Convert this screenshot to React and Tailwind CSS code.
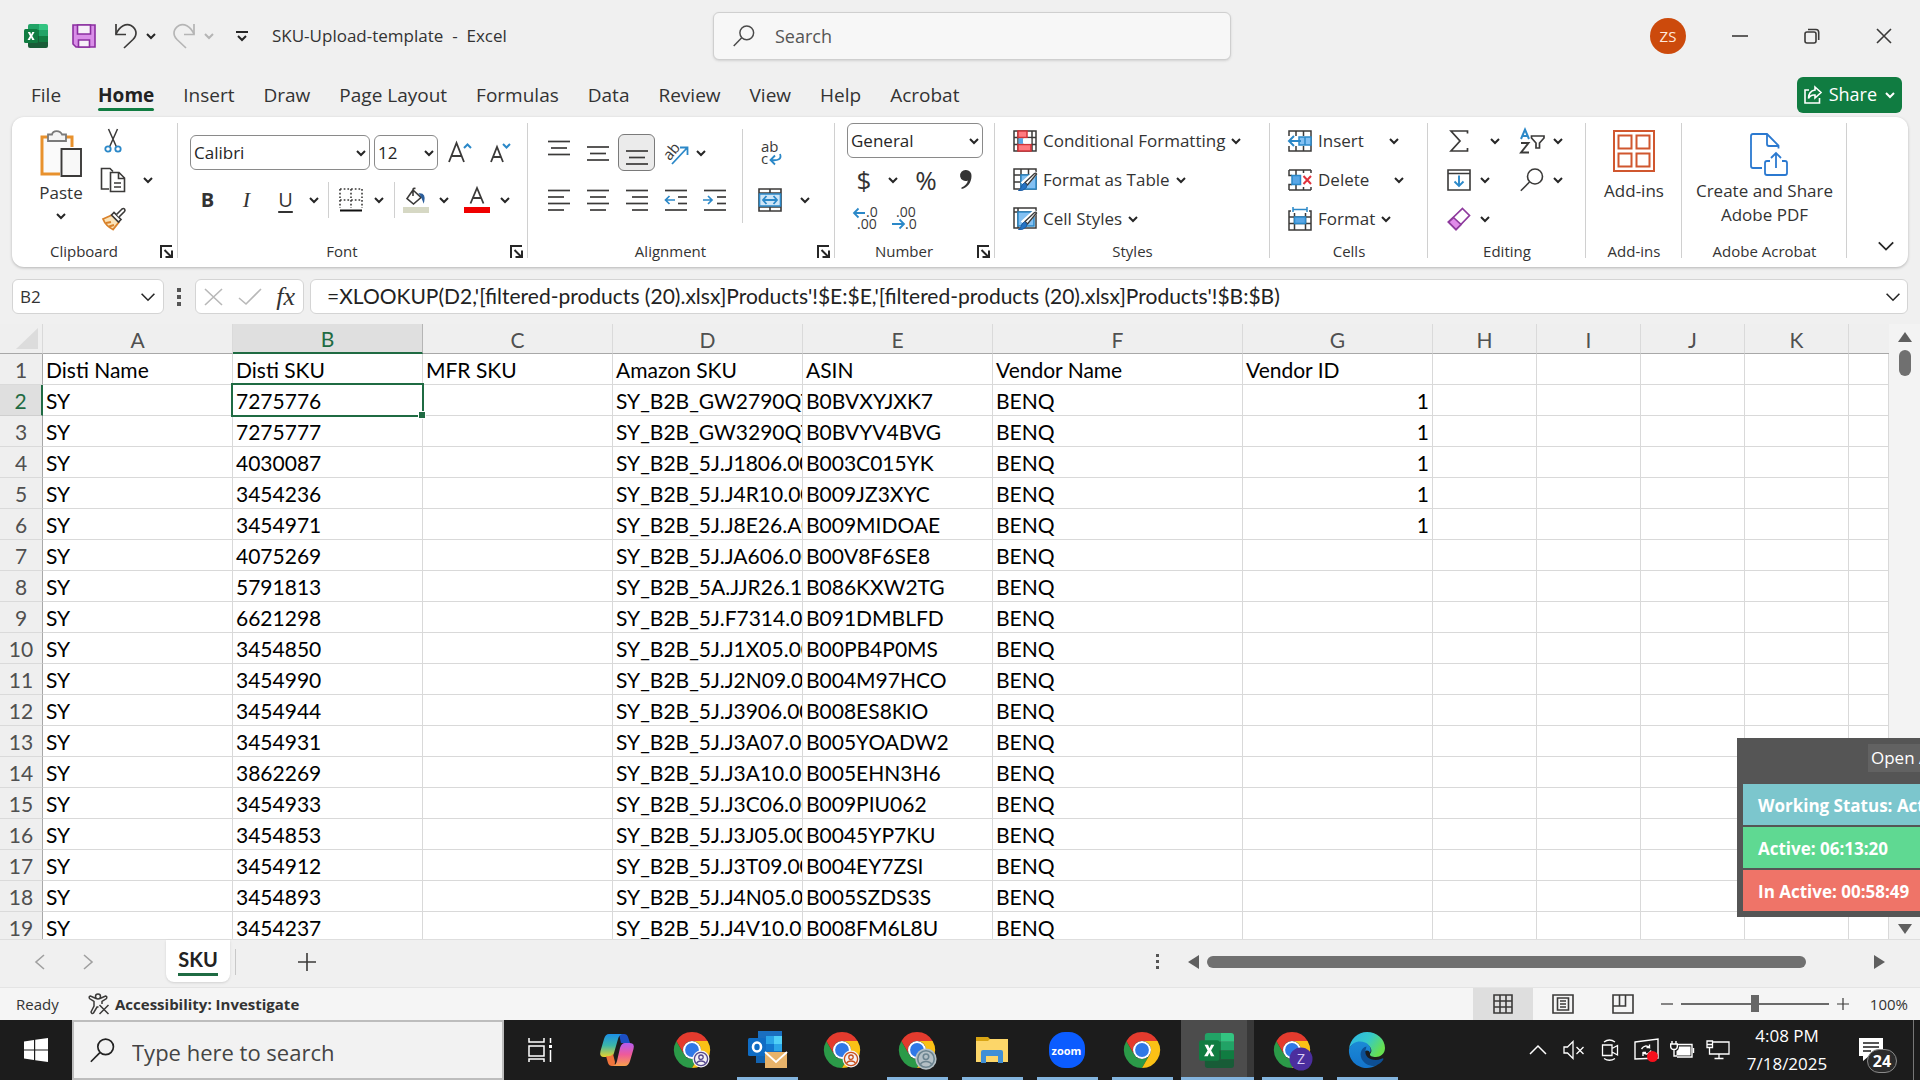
import React from "react";

const UI = "font-['Open_Sans','Noto_Sans',sans-serif]";
const CELL = "font-[Lato,'Open_Sans',sans-serif]";
const INK = "#3b3a39";
const BLUE = "#2b88c8";

/* ---------- generic pieces ---------- */

function Svg({ w = 24, h = 24, vw, vh, children, className = "", sw = 1.6, stroke = INK }) {
  return (
    <svg
      width={w}
      height={h}
      viewBox={`0 0 ${vw || w} ${vh || h}`}
      fill="none"
      stroke={stroke}
      strokeWidth={sw}
      className={`shrink-0 overflow-visible ${className}`}
      aria-hidden="true"
    >
      {children}
    </svg>
  );
}

function Chevron({ color = "#262626", size = 10, sw = 2 }) {
  return (
    <Svg w={size} h={size} vw={10} vh={10} sw={sw} stroke={color}>
      <path d="M1 3 L5 7 L9 3" />
    </Svg>
  );
}

function Btn({ label, className = "", children }) {
  return (
    <button type="button" aria-label={label} className={`flex shrink-0 items-center justify-center ${className}`}>
      {children}
    </button>
  );
}

function Combo({ label, value, className = "" }) {
  return (
    <div className={`relative h-[35px] shrink-0 ${className}`}>
      <select
        aria-label={label}
        defaultValue={value}
        className="h-full w-full appearance-none rounded-md border border-[#8a8a8a] bg-white pl-[3px] text-[17px] text-[#262626]"
      >
        <option>{value}</option>
      </select>
      <span className="pointer-events-none absolute inset-y-0 right-[4px] flex items-center">
        <Chevron />
      </span>
    </div>
  );
}

function Launcher({ label }) {
  return (
    <Btn label={label} className="absolute right-[4px] bottom-[8px] h-4 w-4">
      <Svg w={13} h={13} sw={2} stroke="#262626">
        <path d="M1 13 V1 H12" />
        <path d="M4.500 5 L11 11.500 M12 5.500 V12 H5.500" />
      </Svg>
    </Btn>
  );
}

function Group({ name, className = "", launcher, children }) {
  return (
    <section aria-label={name} className={`relative flex h-[150px] shrink-0 flex-col ${className}`}>
      <div className="h-[121px]">{children}</div>
      <div className={`flex h-[26px] items-center justify-center text-[15px] text-[#333] ${launcher ? "pr-[22px]" : ""}`}>{name}</div>
      {launcher && <Launcher label={`${name} settings`} />}
      <div className="absolute top-[6px] right-0 bottom-[9px] w-px bg-[#d0d0d0]" />
    </section>
  );
}

/* ---------- ribbon icons ---------- */

function ExcelLogo({ size = 24 }) {
  return (
    <Svg w={size} h={size} vw={24} vh={24} stroke="none">
      <path d="M6 0 H15 V6 H4 V2 Q4 0 6 0Z" fill="#21a366" />
      <path d="M15 0 H22 Q24 0 24 2 V6 H15Z" fill="#33c481" />
      <path d="M4 6 H15 V12 H4Z" fill="#107c41" />
      <path d="M15 6 H24 V12 H15Z" fill="#21a366" />
      <path d="M4 12 H15 V18 H4Z" fill="#185c37" />
      <path d="M15 12 H24 V18 H15Z" fill="#107c41" />
      <path d="M4 18 H24 V22 Q24 24 22 24 H6 Q4 24 4 22Z" fill="#185c37" />
      <rect x="0" y="5" width="14" height="14" rx="1.5" fill="#107c41" />
      <path d="M3.800 8 H6.200 L7.200 10.400 L8.300 8 H10.500 L8.300 12 L10.600 16 H8.200 L7.100 13.500 L6 16 H3.500 L5.900 12Z" fill="#fff" />
    </Svg>
  );
}

function SaveIcon() {
  return (
    <Svg stroke="#8b2fa0" sw={1.6}>
      <path d="M1 1 H23 V23 H4 L1 20Z" fill="#d98ee8" />
      <path d="M5.500 1 H18.500 V10 H5.500Z" fill="#f6f0f8" />
      <path d="M6.500 23 V16 H17.500 V23Z" fill="#f6f0f8" />
    </Svg>
  );
}

function UndoIcon({ color = INK, flip }) {
  return (
    <Svg w={24} h={26} stroke={color} sw={1.7} className={flip ? "-scale-x-100" : ""}>
      <path d="M2 1 V11.500 H12" />
      <path d="M2 11 C6 3 12 0 17 2.500 C23 6 23.500 12 19 16.500 L10 25" />
    </Svg>
  );
}

function PasteIcon() {
  return (
    <Svg w={42} h={48}>
      <path d="M4 9 H31 V44 H4Z" fill="#fafafa" stroke="none" />
      <path d="M8 8 H2 V45 H20 M26 8 H32 V18" stroke="#e8912d" strokeWidth="3" />
      <path d="M8 12 V5.500 H12 C13 1 20 1 22 5.500 H26 V12Z" fill="#f4f4f4" stroke="#7a7a7a" strokeWidth="1.8" />
      <path d="M21.500 20 H41 V47 H21.500Z" fill="#f8f8f8" strokeWidth="1.9" />
    </Svg>
  );
}

function CutIcon() {
  return (
    <Svg w={18} h={25} sw={1.5}>
      <path d="M4.500 1 L12.500 19 M13.500 1 L5.500 19" />
      <circle cx="4" cy="21" r="2.700" stroke={BLUE} strokeWidth="1.8" />
      <circle cx="14" cy="21" r="2.700" stroke={BLUE} strokeWidth="1.8" />
    </Svg>
  );
}

function CopyIcon() {
  return (
    <Svg w={26} h={26}>
      <path d="M9 22 H1.500 V1.500 H10 L13 4.500" />
      <path d="M10.500 5.500 H19 L24.500 11 V24.500 H10.500Z M18.500 5.500 V11.500 H24.500 M14 16 H21 M14 20 H21" />
    </Svg>
  );
}

function BrushIcon() {
  return (
    <Svg w={25} h={24}>
      <path d="M2 12 L11 8 L18 15 L12 22.500 C9 21 4 17 2 12Z" fill="#fbe3b8" stroke="#d9822b" strokeWidth="1.800" />
      <path d="M5 16 L10 15 M8 19.500 L13 18" stroke="#d9822b" strokeWidth="2.200" />
      <path d="M10.500 8 L13 5.500 L20 12.500 L17.500 15Z" fill="#fff" />
      <path d="M15.500 7.500 L21 2 Q22.500 1 23.500 2 Q24.500 3.200 23.500 4.500 L18 10" fill="#fff" />
    </Svg>
  );
}

function Lines({ rows, children }) {
  return (
    <Svg w={24} h={22} sw={1.7}>
      {rows.map(([x1, x2, y]) => (
        <path key={y} d={`M${x1} ${y} H${x2}`} />
      ))}
      {children}
    </Svg>
  );
}

const ROW_LEFT = [[1, 23, 1.5], [1, 17, 8], [1, 23, 14.5], [1, 17, 21]];
const ROW_CENTER = [[1, 23, 1.5], [4, 20, 8], [1, 23, 14.5], [4, 20, 21]];
const ROW_RIGHT = [[1, 23, 1.5], [7, 23, 8], [1, 23, 14.5], [7, 23, 21]];
const ROW_INDENT = [[1, 23, 1.5], [14, 23, 8], [14, 23, 14.5], [1, 23, 21]];

function OrientIcon() {
  return (
    <Svg w={26} h={26}>
      <text x="0" y="17" transform="rotate(-50 8 12)" fontSize="15" fill={INK} stroke="none" className={UI}>ab</text>
      <path d="M9 24 L24 8 M17 7.500 H24.500 V15" stroke={BLUE} strokeWidth="1.800" />
    </Svg>
  );
}

function WrapIcon() {
  return (
    <Svg w={24} h={26}>
      <text x="2" y="12" fontSize="15" fill={INK} stroke="none" className={UI}>ab</text>
      <text x="2" y="24" fontSize="15" fill={INK} stroke="none" className={UI}>c</text>
      <path d="M21 14 C23 19 19 21 12 20 M16 15.500 L11.500 20 L16 24.500" stroke={BLUE} strokeWidth="1.800" />
    </Svg>
  );
}

function MergeIcon() {
  return (
    <Svg w={24} h={24}>
      <path d="M1 1 H23 V23 H1Z M1 5 H23 M1 19 H23 M12 1 V5 M12 19 V23" />
      <path d="M1.500 6 H22.500 V18 H1.500Z" fill="#cfe6f8" stroke={BLUE} />
      <path d="M5 12 H19 M8.500 8 L5 12 L8.500 16 M15.500 8 L19 12 L15.500 16" stroke={BLUE} strokeWidth="1.800" />
    </Svg>
  );
}

function DecimalIcon({ increase }) {
  return (
    <Svg w={26} h={26}>
      <text x={increase ? 13 : 4} y="11" fontSize="14" fill={INK} stroke="none" className={UI}>{increase ? ".0" : ".00"}</text>
      <text x={increase ? 4 : 13} y="23" fontSize="14" fill={INK} stroke="none" className={UI}>{increase ? ".00" : ".0"}</text>
      {increase ? (
        <path d="M1 7 H12 M5.500 2.500 L1 7 L5.500 11.500" stroke={BLUE} strokeWidth="1.800" />
      ) : (
        <path d="M0 18 H12 M7.500 13.500 L12 18 L7.500 22.500" stroke={BLUE} strokeWidth="1.800" />
      )}
    </Svg>
  );
}

function BordersIcon() {
  return (
    <Svg w={24} h={24}>
      <path d="M1 1 H23 M1 12 H23 M1 1 V20 M12 1 V20 M23 1 V20" strokeDasharray="1.700 2" />
      <path d="M1 22.500 H23" stroke="#111" strokeWidth="2" />
    </Svg>
  );
}

function FillIcon() {
  return (
    <Svg w={26} h={26}>
      <path d="M10 3 L18 10.500 L10.500 17 L4 11.500 Z M10 9 V3 Q10 .8 12.500 1.500" />
      <path d="M17 7 Q22 7 20.500 14 L18.500 9Z" fill="#2a5d9a" stroke="#2a5d9a" />
      <path d="M0 20 H26 V26 H0Z" fill="#d6d8c4" stroke="none" />
    </Svg>
  );
}

function FontColorIcon() {
  return (
    <Svg w={26} h={26} sw={1.8}>
      <path d="M6.500 16.500 L13 1 L19.500 16.500 M9 11 H17" />
      <path d="M0 20 H26 V26 H0Z" fill="#f00000" stroke="none" />
    </Svg>
  );
}

function GrowIcon({ shrink }) {
  return shrink ? (
    <Svg w={22} h={24} sw={1.8}>
      <path d="M2 21 L8 6 L14 21 M4 16 H12" />
      <path d="M14 3 L17.500 6.500 L21 3" stroke={BLUE} strokeWidth="2" />
    </Svg>
  ) : (
    <Svg w={24} h={24} sw={1.8}>
      <path d="M1 21 L8.500 2 L16 21 M3.500 15 H13.500" />
      <path d="M16 7 L19.500 3.500 L23 7" stroke={BLUE} strokeWidth="2" />
    </Svg>
  );
}

function CondIcon() {
  return (
    <Svg w={24} h={22} sw={1.5}>
      <path d="M1 1 H23 V21 H1Z M1 7.500 H23 M1 14.500 H23 M5 1 V21 M19 1 V21" />
      <path d="M5 1 H14 V7.500 H5Z M5 14.500 H18 V21 H5Z" fill="#ff7b80" stroke="#d13438" />
      <path d="M5.500 8.300 H10 V13.800 H5.500Z" fill="#5aa7e6" stroke="none" />
      <path d="M10.500 8.300 H18.200 V13.800 H10.500Z" fill="#fff" stroke="none" />
    </Svg>
  );
}

function TableBrush({ solid }) {
  return (
    <Svg w={24} h={24} sw={1.5}>
      {solid ? (
        <>
          <path d="M1 1 H23 V21 H1Z M5 1 V21 M1 5 H23" />
          <path d="M5 5 H21 V19 H5Z" fill="#83c0f2" stroke={BLUE} />
        </>
      ) : (
        <>
          <path d="M1 1 H23 V21 H1Z M1 7 H23 M1 14 H8 M8 1 V21 M15.500 1 V8" />
          <path d="M8 7 H23 V21 H8Z" fill="#83c0f2" stroke={BLUE} />
        </>
      )}
      <path d="M23 5.500 L13 17 L10 14.500 L21 4.500Z" fill="#fff" stroke="#fff" strokeWidth="3" />
      <path d="M23.500 6 L14.500 17 L12 14.500 L21.500 5.500 Q23 4.500 23.500 6Z" fill="#fff" strokeWidth="1.400" />
      <path d="M11.500 15 Q15 16.500 13.500 19.500 Q10 23.500 5.500 22.500 Q8.500 21 8.500 18 Q9.500 15.500 11.500 15Z" fill="#2674c4" stroke="#1b5ba3" strokeWidth="1" />
    </Svg>
  );
}

function InsertCells() {
  return (
    <Svg w={24} h={22} sw={1.5}>
      <path d="M1 6 V1 H23 V21 H1 V16 M8 1 V6 M15.500 1 V6 M8 16 V21 M15.500 16 V21" />
      <path d="M11 7 H23 V15 H11Z" fill="#83c0f2" stroke={BLUE} />
      <path d="M17 7 V15" stroke={BLUE} />
      <path d="M1 11 H13 M6 6 L1 11 L6 16" stroke={BLUE} strokeWidth="2" />
    </Svg>
  );
}

function DeleteCells() {
  return (
    <Svg w={24} h={22} sw={1.5}>
      <path d="M1 1 H23 M1 21 H23 M1 1 V6.500 H4 M1 21 V15.500 H4 M8 1 V6 M15.500 1 V4 M8 16 V21 M15.500 18 V21 M23 1 V4 M23 18 V21" />
      <path d="M4 6.500 H12.500 V15.500 H4Z" fill="#5aa7e6" stroke={BLUE} />
      <path d="M15.500 7 L23 15 M23 7 L15.500 15" stroke="#e0323c" strokeWidth="2" />
    </Svg>
  );
}

function FormatCells() {
  return (
    <Svg w={24} h={24} sw={1.5}>
      <path d="M5 0 V5 M19 0 V5 M5 2.500 H19" stroke={BLUE} />
      <path d="M3 4 H1 V23 H23 V4 H21 M1 10 H23 M1 16.500 H23 M6.500 6 V23 M17.500 6 V23" />
      <path d="M6.500 10 H17.500 V16.500 H6.500Z" fill="#5aa7e6" stroke={BLUE} />
    </Svg>
  );
}

function SigmaIcon() {
  return (
    <Svg w={20} h={24} sw={1.7}>
      <path d="M18.500 4.500 V2 H2 L11 12 L2 22 H18.500 V19" />
    </Svg>
  );
}

function SortIcon() {
  return (
    <Svg w={26} h={26} sw={1.7}>
      <path d="M2 11 L6 1.500 L10 11 M3.500 8 H8.500" stroke={BLUE} strokeWidth="2" />
      <path d="M2 15 H9.500 L2 24.500 H10" strokeWidth="1.900" />
      <path d="M12.500 8 H25 V10 L20.500 15 V20 H17 V15 L12.500 10Z" />
    </Svg>
  );
}

function FillDown() {
  return (
    <Svg w={24} h={22}>
      <path d="M1 1 H23 V21 H1Z M1 4.500 H23" />
      <path d="M12 6.500 V17 M7.500 12.500 L12 17 L16.500 12.500" stroke={BLUE} strokeWidth="1.900" />
    </Svg>
  );
}

function Magnifier({ size = 24, color = INK, sw = 1.6 }) {
  return (
    <Svg w={size} h={size} vw={24} vh={24} stroke={color} sw={sw}>
      <circle cx="15" cy="8.500" r="7.500" />
      <path d="M9.500 14 L.8 22.800" />
    </Svg>
  );
}

function EraserIcon() {
  return (
    <Svg w={24} h={24} stroke="#8e3a9d" sw={1.7}>
      <path d="M15.500 1.500 L22.500 8.500 L9 22.500 L1.500 15Z" fill="#fff" />
      <path d="M6.500 10.500 L14 17.500 L9 22.500 L1.500 15Z" fill="#e08be9" />
    </Svg>
  );
}

function AddinsIcon() {
  return (
    <Svg w={42} h={42} stroke="#d0572f" sw={2}>
      <path d="M1 1 H41 V41 H1Z M5.500 5.500 H18.500 V18.500 H5.500Z M23.500 5.500 H36.500 V18.500 H23.500Z M5.500 23.500 H18.500 V36.500 H5.500Z M23.500 23.500 H36.500 V36.500 H23.500Z" />
    </Svg>
  );
}

function PdfShareIcon() {
  return (
    <Svg w={38} h={43} stroke="#2b79d0" sw={1.8} className="ml-2">
      <path d="M12 35 H3 Q1 35 1 33 V3 Q1 1 3 1 H17 L28.500 12.500 V15.500" />
      <path d="M17 1 V11 Q17 13 19 13 H28.500" />
      <path d="M20 28 H17 Q15 28 15 30 V40 Q15 42 17 42 H35 Q37 42 37 40 V30 Q37 28 35 28 H32 M26 35 V20.500 M21 25 L26 20 L31 25" />
    </Svg>
  );
}

/* ---------- top areas ---------- */

function TitleBar() {
  return (
    <header className="flex h-[72px] shrink-0 items-center">
      <div className="flex w-[713px] shrink-0 items-center pl-6">
        <ExcelLogo />
        <Btn label="Save" className="ml-6"><SaveIcon /></Btn>
        <Btn label="Undo" className="ml-[18px]"><UndoIcon /></Btn>
        <Btn label="Undo list" className="ml-2"><Chevron /></Btn>
        <Btn label="Redo" className="ml-4"><UndoIcon color="#b5b5b5" flip /></Btn>
        <Btn label="Redo list" className="ml-2"><Chevron color="#b5b5b5" /></Btn>
        <Btn label="Customize toolbar" className="ml-[22px]">
          <Svg w={12} h={12} stroke="#262626" sw={2}>
            <path d="M0 2 H12 M2 6 L6 10 L10 6" />
          </Svg>
        </Btn>
        <h1 className="ml-6 text-[17px] whitespace-pre text-[#333]">SKU-Upload-template  -  Excel</h1>
      </div>
      <label className="flex h-12 w-[518px] shrink-0 items-center rounded-md border border-[#cfcfcf] bg-[#f7f7f7] pl-[19px] shadow-sm">
        <Magnifier size={22} color="#4a4a4a" />
        <input
          aria-label="Search"
          placeholder="Search"
          className="ml-5 flex-1 bg-transparent text-[18px] outline-none placeholder:text-[#555]"
        />
      </label>
      <div className="ml-auto flex items-center">
        <button type="button" className="flex h-9 w-9 items-center justify-center rounded-full bg-[#cc4a0c] text-[15px] text-[#ffe9dc]">ZS</button>
        <Btn label="Minimize" className="ml-[18px] h-12 w-[72px]">
          <Svg w={16} h={16}><path d="M0 8 H16" /></Svg>
        </Btn>
        <Btn label="Restore" className="h-12 w-[72px]">
          <Svg w={16} h={16}>
            <rect x="1" y="4" width="11" height="11" rx="2" />
            <path d="M4 1.500 H12 Q14.700 1.500 14.700 4.500 V12" />
          </Svg>
        </Btn>
        <Btn label="Close" className="h-12 w-[72px]">
          <Svg w={16} h={16}><path d="M1 1 L15 15 M15 1 L1 15" /></Svg>
        </Btn>
      </div>
    </header>
  );
}

const TABS = ["File", "Home", "Insert", "Draw", "Page Layout", "Formulas", "Data", "Review", "View", "Help", "Acrobat"];

function RibbonTabs() {
  return (
    <nav className="flex h-[45px] shrink-0 items-center justify-between pr-[18px] pl-[31px]">
      <div className="flex items-center gap-[29px] pt-[2px]">
        {TABS.map((t) => (
          <button
            key={t}
            type="button"
            className={
              t === "Home"
                ? "relative ml-2 text-[19px] font-bold text-[#222] after:absolute after:inset-x-0 after:-bottom-[1px] after:h-[3px] after:rounded after:bg-[#107c41]"
                : "text-[19px] text-[#333]"
            }
          >
            {t}
          </button>
        ))}
      </div>
      <button type="button" className="flex h-9 items-center rounded-md bg-[#107c41] px-[7px] text-[18px] text-white">
        <Svg w={18} h={18} stroke="#fff">
          <path d="M5 4 H1 V17 H15.500 V12" />
          <path d="M11 1 L17 6.500 L11 12 V9 Q6.500 8.500 4.500 12.500 Q4.500 5 11 4Z" />
        </Svg>
        <span className="ml-[7px]">Share</span>
        <span className="ml-[8px]"><Chevron color="#fff" /></span>
      </button>
    </nav>
  );
}

function MenuRow({ icon, text, wide }) {
  return (
    <button type="button" className="flex h-[39px] items-center text-[17px] text-[#333]">
      {icon}
      <span className="ml-[6px]">{text}</span>
      <span className={wide ? "ml-[25px]" : "ml-[6px]"}><Chevron /></span>
    </button>
  );
}

function Ribbon() {
  return (
    <div className="mx-3 flex h-[150px] shrink-0 rounded-xl bg-white text-[#333] shadow-[0_1px_3px_rgba(0,0,0,0.25)]">
      <Group name="Clipboard" className="w-[166px]" launcher>
        <div className="flex pl-[29px]">
          <button type="button" className="flex w-10 flex-col items-center pt-3 text-[17px] leading-6">
            <PasteIcon />
            <span className="mt-1">Paste</span>
            <span className="mt-[6px]"><Chevron /></span>
          </button>
          <div className="ml-3 flex w-10 flex-col items-center pt-1">
            <Btn label="Cut" className="h-[39px]"><CutIcon /></Btn>
            <Btn label="Copy" className="h-[39px]"><CopyIcon /></Btn>
            <Btn label="Format Painter" className="h-[39px]"><BrushIcon /></Btn>
          </div>
          <Btn label="Copy options" className="mt-[43px] ml-[10px] h-[39px] w-[10px]"><Chevron /></Btn>
        </div>
      </Group>

      <Group name="Font" className="w-[350px]" launcher>
        <div className="pt-3">
          <div className="flex h-[47px] items-center pl-3">
            <Combo label="Font name" value="Calibri" className="w-[180px]" />
            <Combo label="Font size" value="12" className="ml-1 w-16" />
            <Btn label="Increase font size" className="w-[44px]"><GrowIcon /></Btn>
            <Btn label="Decrease font size" className="w-[36px]"><GrowIcon shrink /></Btn>
          </div>
          <div className="flex h-[47px] items-center pl-[10px] text-[20px]">
            <Btn label="Bold" className="w-[39px] font-bold">B</Btn>
            <Btn label="Italic" className="w-[39px] font-['Liberation_Serif',serif] text-[22px] italic">I</Btn>
            <Btn label="Underline" className="w-[39px] underline underline-offset-4">U</Btn>
            <Btn label="Underline options" className="w-[17px]"><Chevron /></Btn>
            <div className="mr-[5px] ml-[6px] h-9 w-px bg-[#d0d0d0]" />
            <Btn label="Borders" className="w-[34px]"><BordersIcon /></Btn>
            <Btn label="Border options" className="w-[22px]"><Chevron /></Btn>
            <div className="mx-[4px] h-9 w-px bg-[#d0d0d0]" />
            <Btn label="Fill color" className="w-[34px]"><FillIcon /></Btn>
            <Btn label="Fill options" className="w-[22px]"><Chevron /></Btn>
            <Btn label="Font color" className="w-[44px]"><FontColorIcon /></Btn>
            <Btn label="Font color options" className="w-[12px]"><Chevron /></Btn>
          </div>
        </div>
      </Group>

      <Group name="Alignment" className="w-[307px]" launcher>
        <div className="flex items-center pt-3 pl-[11px]">
          <div className="w-[195px]">
            <div className="flex h-[47px] items-center">
              <Btn label="Top align" className="w-[39px] pb-1"><Lines rows={[[1, 23, 1.5], [4, 20, 8], [1, 23, 14.5]]} /></Btn>
              <Btn label="Middle align" className="w-[39px]"><Lines rows={[[1, 23, 5], [4, 20, 11.5], [1, 23, 18]]} /></Btn>
              <Btn label="Bottom align" className="mx-[1px] h-[37px] w-[37px] rounded-md border border-[#7a7a7a] bg-[#ebebeb] pt-2">
                <Lines rows={[[1, 23, 5], [4, 20, 11.5], [1, 23, 18]]} />
              </Btn>
              <Btn label="Orientation" className="w-[39px]"><OrientIcon /></Btn>
              <Btn label="Orientation options" className="w-[12px]"><Chevron /></Btn>
            </div>
            <div className="flex h-[47px] items-center">
              <Btn label="Align left" className="w-[39px]"><Lines rows={ROW_LEFT} /></Btn>
              <Btn label="Center" className="w-[39px]"><Lines rows={ROW_CENTER} /></Btn>
              <Btn label="Align right" className="w-[39px]"><Lines rows={ROW_RIGHT} /></Btn>
              <Btn label="Decrease indent" className="w-[39px]">
                <Lines rows={ROW_INDENT}><path d="M1.500 11 H11 M5.500 7 L1.500 11 L5.500 15" stroke={BLUE} /></Lines>
              </Btn>
              <Btn label="Increase indent" className="w-[39px]">
                <Lines rows={ROW_INDENT}><path d="M0 11 H9 M5 7 L9 11 L5 15" stroke={BLUE} /></Lines>
              </Btn>
            </div>
          </div>
          <div className="ml-2 h-[94px] w-px bg-[#d0d0d0]" />
          <div>
            <Btn label="Wrap text" className="h-[47px] w-14"><WrapIcon /></Btn>
            <div className="flex">
              <Btn label="Merge and center" className="h-[47px] w-[53px]"><MergeIcon /></Btn>
              <Btn label="Merge options" className="w-[18px]"><Chevron /></Btn>
            </div>
          </div>
        </div>
      </Group>

      <Group name="Number" className="w-[160px]" launcher>
        <div className="pt-1">
          <div className="flex h-[39px] items-center pl-3">
            <Combo label="Number format" value="General" className="w-[136px]" />
          </div>
          <div className="flex h-[39px] items-center pl-[11px] text-[26px] leading-none">
            <Btn label="Currency" className="w-9">$</Btn>
            <Btn label="Currency options" className="w-[22px]"><Chevron /></Btn>
            <Btn label="Percent" className="w-[44px]">%</Btn>
            <Btn label="Comma style" className="w-9">
              <Svg w={12} h={20} stroke="none">
                <path d="M6 0 A5.500 5.500 0 0 1 11.500 6 C11.500 13 7 18 1.500 19 V17.500 C5 16 7.500 13.500 7.800 10.500 A5.500 5.500 0 1 1 6 0Z" fill="#333" />
              </Svg>
            </Btn>
          </div>
          <div className="flex h-[39px] items-center pl-[11px]">
            <Btn label="Increase decimal" className="w-[39px]"><DecimalIcon increase /></Btn>
            <Btn label="Decrease decimal" className="w-[39px]"><DecimalIcon /></Btn>
          </div>
        </div>
      </Group>

      <Group name="Styles" className="w-[275px]">
        <div className="pt-1 pl-[18px]">
          <MenuRow icon={<CondIcon />} text="Conditional Formatting" />
          <MenuRow icon={<TableBrush />} text="Format as Table" />
          <MenuRow icon={<TableBrush solid />} text="Cell Styles" />
        </div>
      </Group>

      <Group name="Cells" className="w-[158px]">
        <div className="pt-1 pl-[18px]">
          <MenuRow icon={<InsertCells />} text="Insert" wide />
          <MenuRow icon={<DeleteCells />} text="Delete" wide />
          <MenuRow icon={<FormatCells />} text="Format" />
        </div>
      </Group>

      <Group name="Editing" className="w-[158px]">
        <div className="grid grid-cols-[40px_32px_42px_10px] grid-rows-[39px_39px_39px] pt-1 pl-[11px]">
          <Btn label="AutoSum"><SigmaIcon /></Btn>
          <Btn label="AutoSum options"><Chevron /></Btn>
          <Btn label="Sort and filter"><SortIcon /></Btn>
          <Btn label="Sort options"><Chevron /></Btn>
          <Btn label="Fill"><FillDown /></Btn>
          <Btn label="Fill down options" className="pr-5"><Chevron /></Btn>
          <Btn label="Find"><Magnifier /></Btn>
          <Btn label="Find options"><Chevron /></Btn>
          <Btn label="Clear"><EraserIcon /></Btn>
          <Btn label="Clear options" className="pr-5"><Chevron /></Btn>
        </div>
      </Group>

      <Group name="Add-ins" className="w-24">
        <button type="button" className="flex w-full flex-col items-center pt-[13px] text-[17px] leading-6">
          <AddinsIcon />
          <span className="mt-[7px]">Add-ins</span>
        </button>
      </Group>

      <Group name="Adobe Acrobat" className="w-[165px]">
        <button type="button" className="flex w-full flex-col items-center pt-4 text-[17px] leading-6">
          <PdfShareIcon />
          <span className="mt-[3px] text-center">Create and Share<br />Adobe PDF</span>
        </button>
      </Group>

      <Btn label="Collapse ribbon" className="mt-auto mr-3 mb-[11px] ml-auto h-5 w-5">
        <Chevron size={18} sw={1} />
      </Btn>
    </div>
  );
}

function FormulaBar() {
  return (
    <div className="mx-3 mt-3 flex h-[35px] shrink-0 items-center">
      <div className="flex h-full w-[152px] items-center justify-between rounded-md border border-[#d4d4d4] bg-white pr-[7px] pl-[7px]">
        <input aria-label="Name box" defaultValue="B2" className="w-20 bg-transparent text-[17px] text-[#333] outline-none" />
        <Chevron size={16} sw={1} />
      </div>
      <div className="flex w-[29px] justify-center">
        <Svg w={4} h={18} stroke="none"><path d="M0 0 H4 V4 H0Z M0 7 H4 V11 H0Z M0 14 H4 V18 H0Z" fill="#555" /></Svg>
      </div>
      <div className="ml-[2px] flex h-full w-[109px] items-center justify-between rounded-md border border-[#d4d4d4] bg-white px-[8px]">
        <Btn label="Cancel"><Svg w={20} h={20} stroke="#b8b8b8"><path d="M1 2 L18 18 M18 2 L1 18" /></Svg></Btn>
        <Btn label="Enter"><Svg w={24} h={20} stroke="#b8b8b8"><path d="M1 11 L8 17 L23 2" /></Svg></Btn>
        <button type="button" aria-label="Insert function" className="font-['Liberation_Serif',serif] text-[26px] leading-none text-[#333] italic">fx</button>
      </div>
      <div className="ml-[6px] flex h-full flex-1 items-center rounded-md border border-[#d4d4d4] bg-white pr-[6px] pl-4">
        <input
          aria-label="Formula"
          defaultValue="=XLOOKUP(D2,'[filtered-products (20).xlsx]Products'!$E:$E,'[filtered-products (20).xlsx]Products'!$B:$B)"
          className={`${CELL} h-[31px] flex-1 bg-transparent pb-[2px] text-[21px] text-[#222] outline-none`}
        />
        <Chevron size={16} sw={1} />
      </div>
    </div>
  );
}

/* ---------- worksheet ---------- */

const COLS = ["A", "B", "C", "D", "E", "F", "G", "H", "I", "J", "K"];

const ROWS = [
  ["7275776", "GW2790QT", "B0BVXYJXK7"],
  ["7275777", "GW3290QT", "B0BVYV4BVG"],
  ["4030087", "5J.J1806.001", "B003C015YK"],
  ["3454236", "5J.J4R10.001", "B009JZ3XYC"],
  ["3454971", "5J.J8E26.A01", "B009MIDOAE"],
  ["4075269", "5J.JA606.001", "B00V8F6SE8"],
  ["5791813", "5A.JJR26.100", "B086KXW2TG"],
  ["6621298", "5J.F7314.001", "B091DMBLFD"],
  ["3454850", "5J.J1X05.001", "B00PB4P0MS"],
  ["3454990", "5J.J2N09.001", "B004M97HCO"],
  ["3454944", "5J.J3906.001", "B008ES8KIO"],
  ["3454931", "5J.J3A07.001", "B005YOADW2"],
  ["3862269", "5J.J3A10.001", "B005EHN3H6"],
  ["3454933", "5J.J3C06.001", "B009PIU062"],
  ["3454853", "5J.J3J05.001", "B0045YP7KU"],
  ["3454912", "5J.J3T09.001", "B004EY7ZSI"],
  ["3454893", "5J.J4N05.001", "B005SZDS3S"],
  ["3454237", "5J.J4V10.001", "B008FM6L8U"],
];

const SHEET = [
  ["Disti Name", "Disti SKU", "MFR SKU", "Amazon SKU", "ASIN", "Vendor Name", "Vendor ID"],
  ...ROWS.map(([sku, model, asin], i) => ["SY", sku, "", `SY_B2B_${model}`, asin, "BENQ", i < 5 ? "1" : ""]),
];

function Cell({ value, numeric, selected }) {
  if (selected) {
    return (
      <td className="relative border-r border-b border-[#d9d9d9] p-0 pt-[2px] pl-[3px]">
        {value}
        <span className="pointer-events-none absolute -top-[2px] -right-[2px] -bottom-[2px] -left-[2px] border-2 border-[#1f6b43]" />
        <span className="absolute -right-[3px] -bottom-[3px] h-[6px] w-[6px] bg-[#1f6b43] outline-1 outline-white" />
      </td>
    );
  }
  return (
    <td className={`overflow-hidden border-r border-b border-[#d9d9d9] p-0 pt-[2px] ${numeric ? "pr-[3px] text-right" : "pl-[3px]"}`}>{value}</td>
  );
}

function Worksheet() {
  return (
    <div className="mt-[10px] flex min-h-0 flex-1">
      <div className="h-full min-w-0 flex-1 overflow-hidden bg-white">
        <table className={`${CELL} w-full table-fixed border-separate border-spacing-0 text-[21px] leading-[28px] whitespace-nowrap text-black`}>
          <colgroup>
            <col className="w-[43px]" />
            <col className="w-[190px]" />
            <col className="w-[190px]" />
            <col className="w-[190px]" />
            <col className="w-[190px]" />
            <col className="w-[190px]" />
            <col className="w-[250px]" />
            <col className="w-[190px]" />
            <col className="w-[104px]" />
            <col className="w-[104px]" />
            <col className="w-[104px]" />
            <col className="w-[104px]" />
            <col />
          </colgroup>
          <thead>
            <tr className="h-[30px] leading-[26px] text-[#505050]">
              <th aria-label="Select all" className="border-r border-b border-[#a8a8a8] border-r-[#d9d9d9] bg-[#efefef] p-0">
                <Svg w={22} h={21} stroke="none" className="ml-[16px]"><path d="M22 0 V21 H0Z" fill="#dcdcdc" /></Svg>
              </th>
              {COLS.map((c) => (
                <th
                  key={c}
                  scope="col"
                  className={
                    c === "B"
                      ? "border-r border-b-2 border-r-[#b5b5b5] border-b-[#1f6b43] bg-[#dfdfdf] p-0 pt-[2px] font-normal text-[#1f6b43]"
                      : "border-r border-b border-r-[#dadada] border-b-[#a8a8a8] bg-[#efefef] p-0 pt-[2px] font-normal"
                  }
                >
                  {c}
                </th>
              ))}
              <th aria-label="L" className="border-b border-[#a8a8a8] bg-[#efefef] p-0" />
            </tr>
          </thead>
          <tbody>
            {SHEET.map((row, r) => (
              <tr key={r} className="h-[31px]">
                <th
                  scope="row"
                  className={
                    r === 1
                      ? "border-r-2 border-b border-r-[#1f6b43] border-b-[#cfcfcf] bg-[#dfdfdf] p-0 pt-[2px] font-normal text-[#1f6b43]"
                      : "border-r border-b border-r-[#a8a8a8] border-b-[#dadada] bg-[#efefef] p-0 pt-[2px] font-normal text-[#505050]"
                  }
                >
                  {r + 1}
                </th>
                {row.map((v, c) => (
                  <Cell key={c} value={v} numeric={r > 0 && c === 6} selected={r === 1 && c === 1} />
                ))}
                <Cell />
                <Cell />
                <Cell />
                <Cell />
                <Cell />
              </tr>
            ))}
          </tbody>
        </table>
      </div>
      <div className="flex w-[31px] shrink-0 flex-col items-center bg-[#f3f3f3] pt-[7px]">
        <Btn label="Scroll up"><Svg w={14} h={12} stroke="none"><path d="M7 1 L14 11 H0Z" fill="#5f5f5f" /></Svg></Btn>
        <div className="mt-[7px] h-[26px] w-3 rounded-full bg-[#707070]" />
        <Btn label="Scroll down" className="mt-auto mb-1"><Svg w={14} h={12} stroke="none"><path d="M7 11 L14 1 H0Z" fill="#5f5f5f" /></Svg></Btn>
      </div>
    </div>
  );
}

function SheetTabs() {
  return (
    <div className="flex h-12 shrink-0 items-center border-t border-[#dedede] pb-[3px]">
      <Btn label="Previous sheet" className="ml-[30px] w-5"><Svg w={10} h={16} stroke="#a0a0a0"><path d="M9 1 L1 8 L9 15" /></Svg></Btn>
      <Btn label="Next sheet" className="ml-7 w-5"><Svg w={10} h={16} stroke="#a0a0a0"><path d="M1 1 L9 8 L1 15" /></Svg></Btn>
      <button type="button" className={`${CELL} ml-[68px] flex h-[42px] w-16 items-center justify-center self-start rounded-b-lg bg-white pb-[2px] shadow-sm`}>
        <span className="border-b-[3px] border-[#1f6b43] text-[20px] leading-[28px] font-bold text-[#222]">SKU</span>
      </button>
      <div className="ml-[5px] h-[26px] w-px bg-[#c8c8c8]" />
      <Btn label="New sheet" className="ml-[62px]"><Svg w={18} h={18}><path d="M9 0 V18 M0 9 H18" /></Svg></Btn>
      <div className="ml-auto flex w-[764px] shrink-0 items-center">
        <Svg w={3} h={16} stroke="none"><path d="M0 0 H3 V3 H0Z M0 6 H3 V9 H0Z M0 12 H3 V15 H0Z" fill="#555" /></Svg>
        <Btn label="Scroll left" className="ml-[29px]"><Svg w={11} h={14} stroke="none"><path d="M0 7 L11 0 V14Z" fill="#5f5f5f" /></Svg></Btn>
        <div className="ml-2 h-3 w-[599px] rounded-full bg-[#707070]" />
        <Btn label="Scroll right" className="ml-[68px]"><Svg w={11} h={14} stroke="none"><path d="M11 7 L0 0 V14Z" fill="#5f5f5f" /></Svg></Btn>
      </div>
    </div>
  );
}

function StatusBar() {
  return (
    <footer className="flex h-[33px] shrink-0 items-center border-t border-[#e4e4e4] bg-[#f5f5f5] text-[15px] text-[#333]">
      <span className="w-[72px] pl-4">Ready</span>
      <button type="button" className="ml-4 flex items-center font-bold">
        <Svg w={22} h={22} sw={1.5}>
          <circle cx="10" cy="3.500" r="2.500" />
          <path d="M8 5.500 L2.500 3 Q.5 3.500 1.500 5.500 L6 8.500 V13 L3 19 Q4 21.500 5.500 20 L9 14 H10.500 M12 5.500 L17.500 3 Q19.500 3.500 18.500 5.500 L14 8.500 V11" />
          <path d="M11.500 12 L20.500 21 M20.500 12 L11.500 21" />
        </Svg>
        <span className="ml-[5px]">Accessibility: Investigate</span>
      </button>
      <div className="ml-auto flex h-full shrink-0 items-center">
        <Btn label="Normal view" className="h-full w-[60px] bg-[#dedede]">
          <Svg w={20} h={20}><path d="M1 1 H19 V19 H1Z M1 7 H19 M1 13 H19 M7 1 V19 M13 1 V19" /></Svg>
        </Btn>
        <Btn label="Page layout view" className="w-[60px]">
          <Svg w={22} h={20}><path d="M1 1 H21 V19 H1Z M5.500 4 H16.500 V16 H5.500Z M8 7 H14 M8 10 H14 M8 13 H14" /></Svg>
        </Btn>
        <Btn label="Page break view" className="w-[60px]">
          <Svg w={22} h={20}><path d="M1 1 H21 V19 H1Z M1 12 H13.500 V1 M7.500 1 V12" /></Svg>
        </Btn>
        <Btn label="Zoom out" className="ml-2"><Svg w={12} h={12} sw={1.2}><path d="M0 6 H12" /></Svg></Btn>
        <input
          type="range"
          aria-label="Zoom"
          min="0"
          max="200"
          defaultValue="100"
          className="ml-2 h-5 w-[148px] appearance-none bg-transparent [&::-webkit-slider-runnable-track]:h-[2px] [&::-webkit-slider-runnable-track]:bg-[#6a6a6a] [&::-webkit-slider-thumb]:-mt-2 [&::-webkit-slider-thumb]:h-[17px] [&::-webkit-slider-thumb]:w-2 [&::-webkit-slider-thumb]:appearance-none [&::-webkit-slider-thumb]:bg-[#666]"
        />
        <Btn label="Zoom in" className="ml-2"><Svg w={12} h={12} sw={1.2}><path d="M0 6 H12 M6 0 V12" /></Svg></Btn>
        <span className="w-[71px] pr-3 text-right">100%</span>
      </div>
    </footer>
  );
}

/* ---------- taskbar ---------- */

function Chrome({ children }) {
  return (
    <Svg w={36} h={36} stroke="none">
      <g transform="scale(.75)">
        <path d="M13.600 30 L3.200 12 A24 24 0 0 0 24 48 L34.400 30 A12 12 0 0 1 13.600 30Z" fill="#2b9a48" />
        <path d="M34.400 30 L24 48 A24 24 0 0 0 44.800 12 H24 A12 12 0 0 1 34.400 30Z" fill="#fbc116" />
        <path d="M24 12 H44.800 A24 24 0 0 0 3.200 12 L13.600 30 A12 12 0 0 1 24 12Z" fill="#e33b2e" />
        <circle cx="24" cy="24" r="12" fill="#fff" />
        <circle cx="24" cy="24" r="9.200" fill="#2f78e6" />
      </g>
      {children}
    </Svg>
  );
}

function Person({ color, bg = "#f3f1f5", r = 8, x = 27, y = 27 }) {
  return (
    <g transform={`translate(${x} ${y}) scale(${r / 8})`}>
      <circle r="8.500" fill={bg} />
      <circle r="6.600" stroke={color} strokeWidth="1.300" />
      <circle cy="-1.800" r="2.200" stroke={color} strokeWidth="1.300" />
      <path d="M-4.500 4.500 Q-3.500 2 0 2 Q3.500 2 4.500 4.500" stroke={color} strokeWidth="1.300" />
    </g>
  );
}

function Copilot() {
  return (
    <Svg w={36} h={34} stroke="none">
      <defs>
        <linearGradient id="cpA" x1="0" y1="0" x2="0" y2="1">
          <stop offset="0" stopColor="#1b8fe6" />
          <stop offset=".5" stopColor="#3cb7a8" />
          <stop offset="1" stopColor="#e9d32c" />
        </linearGradient>
        <linearGradient id="cpB" x1="0" y1="0" x2="0" y2="1">
          <stop offset="0" stopColor="#b45cf0" />
          <stop offset=".5" stopColor="#ee5a9a" />
          <stop offset="1" stopColor="#f7a04b" />
        </linearGradient>
      </defs>
      <path d="M20 1 H25 Q28 1 29 4 L31 10 H22Z" fill="#1c4fc4" />
      <path d="M10 1 H23 Q20 2 19 6 L15 20 Q14 24 10 24 H5 Q0 24 1.500 18 L5 6 Q6.500 1 10 1Z" fill="url(#cpA)" />
      <path d="M7 23 Q12 24 14 21 L16 29 Q15 33 18 33 H13 Q10 33 9 30Z" fill="#f0743c" />
      <path d="M26 10 H31 Q36 10 34.500 16 L31 28 Q29.500 33 26 33 H14 Q17 32 18 28 L21 15 Q22.500 10 26 10Z" fill="url(#cpB)" />
    </Svg>
  );
}

function Outlook() {
  return (
    <Svg w={40} h={38} stroke="none">
      <path d="M11 0 H35 V24 H11Z" fill="#1a6fc0" />
      <path d="M19 5 H27 V13 H19Z" fill="#2aa5e8" />
      <path d="M27 5 H35 V13 H27Z" fill="#50d0f7" />
      <path d="M19 13 H27 V20 H19Z" fill="#1277cf" />
      <path d="M27 13 H35 V20 H27Z" fill="#2aa5e8" />
      <path d="M9 22 H36 V32 H9Z" fill="#1363b0" />
      <rect x="1" y="7" width="18" height="18" rx="1.500" fill="#0f6cc4" />
      <ellipse cx="10" cy="16" rx="4" ry="4.500" stroke="#fff" strokeWidth="2.600" />
      <path d="M18 21 H40 V37 H18Z" fill="#e8b36a" />
      <path d="M18 21 L29 31 L40 21" stroke="#fff" strokeWidth="1.800" />
    </Svg>
  );
}

function Explorer() {
  return (
    <Svg w={32} h={28} stroke="none">
      <path d="M0 1 H12 L15 4 H32 V10 H0Z" fill="#d9a514" />
      <path d="M0 5 H12 L14 3 H32 V26 H0Z" fill="#fcd669" />
      <path d="M5 27 V16 Q5 14 7 14 H25 Q27 14 27 16 V27 H22 V20 H10 V27Z" fill="#3f8fd6" />
    </Svg>
  );
}

function ZoomLogo() {
  return (
    <span className="flex h-9 w-9 items-center justify-center rounded-[16px] bg-[#0b5cff] text-[11px] leading-none font-bold text-white">zoom</span>
  );
}

function Edge() {
  return (
    <Svg w={36} h={36} stroke="none">
      <defs>
        <linearGradient id="edA" x1="0" y1="0" x2="1" y2=".5">
          <stop offset="0" stopColor="#2bb3e8" />
          <stop offset=".55" stopColor="#36c9c9" />
          <stop offset="1" stopColor="#66e050" />
        </linearGradient>
        <linearGradient id="edB" x1="0" y1="0" x2="0" y2="1">
          <stop offset="0" stopColor="#1b8ad6" />
          <stop offset="1" stopColor="#1374cc" />
        </linearGradient>
      </defs>
      <path d="M0 17 C1 7 9 0 18 0 C28 0 36 7 36 16 C36 22 31 25 27 25 C23 25 20.500 24 21 22 C24 19 22 14 17 12 C10 9 3 11 0 17Z" fill="url(#edA)" />
      <path d="M0 17 C3 10 10 8 16 10.500 C21 12.500 23 17 21 21 C20 17 15 18 14 22 C13 29 20 35 28 33 C25 35 21 36 18 36 C8 36 -1 28 0 17Z" fill="url(#edB)" />
      <path d="M17.500 14.500 C11 16 10 24 14 29 C18 34 25 35 29 32.500 C32 31 34 28.500 34.500 27 C34.500 26 33.500 26 32.500 26.700 C26 29.500 18 27.500 16.500 21.500 C16 19 17 16 17.500 14.500Z" fill="#0d4f94" />
    </Svg>
  );
}

const APPS = [
  { name: "Copilot", icon: <Copilot /> },
  { name: "Chrome profile 1", icon: <Chrome><Person color="#54478c" /></Chrome> },
  { name: "Outlook", icon: <Outlook />, open: true },
  { name: "Chrome profile 2", icon: <Chrome><Person color="#c8501e" /></Chrome> },
  { name: "Chrome profile 3", icon: <Chrome><Person color="#6c8490" bg="#b4c0c6" r={10} x={27} y={27} /></Chrome>, open: true },
  { name: "File Explorer", icon: <Explorer />, open: true },
  { name: "Zoom", icon: <ZoomLogo />, open: true },
  { name: "Chrome", icon: <Chrome />, open: true },
  { name: "Excel", icon: <ExcelLogo size={35} />, open: true, active: true },
  {
    name: "Chrome profile Z",
    icon: (
      <Chrome>
        <circle cx="27" cy="27" r="11.500" fill="#4b2e9e" />
        <text x="27" y="32" fontSize="14" textAnchor="middle" fill="#d9cdf5" className={UI}>Z</text>
      </Chrome>
    ),
    open: true,
  },
  { name: "Edge", icon: <Edge />, open: true },
];

function Taskbar() {
  return (
    <div className="flex h-[60px] shrink-0 items-stretch bg-[#1c1c1c] text-white">
      <Btn label="Start" className="w-[72px]">
        <Svg w={24} h={24} stroke="none">
          <path d="M0 3.500 L10 2 V11.400 H0Z M11.200 1.800 L24 0 V11.400 H11.200Z M0 12.600 H10 V22 L0 20.500Z M11.200 12.600 H24 V24 L11.200 22.200Z" fill="#fff" />
        </Svg>
      </Btn>
      <label className="flex w-[432px] shrink-0 items-center border-2 border-[#bdbdbd] bg-[#f2f2f2] pl-4">
        <Magnifier size={25} color="#222" />
        <input
          aria-label="Type here to search"
          placeholder="Type here to search"
          className="mt-1 ml-[17px] w-80 bg-transparent text-[22px] outline-none placeholder:text-[#444]"
        />
      </label>
      <Btn label="Task view" className="w-[75px] pr-[3px]">
        <Svg w={24} h={24} stroke="#fff" sw={1.5}>
          <path d="M1 0 V4 H16 V0 M1 8 H16 V18 H1Z M1 24 V21 H16 V24 M22.500 0 V5 M22.500 12 V24" />
          <path d="M21 7 H24 V10 H21Z" fill="#fff" stroke="none" />
        </Svg>
      </Btn>
      {APPS.map((a) => (
        <button key={a.name} type="button" aria-label={a.name} className="relative flex w-[75px] shrink-0 items-center justify-center">
          {a.active && (
            <span className="absolute inset-y-0 left-[2px] flex w-[73px] bg-[#383838]">
              <span className="w-[66px] bg-[#4c4c4c]" />
            </span>
          )}
          <span className="relative">{a.icon}</span>
          {a.open && (
            <span className={a.active ? "absolute bottom-0 left-[2px] h-[3px] w-[73px] bg-[#83b4de]" : "absolute bottom-0 left-[8px] h-[3px] w-[61px] bg-[#83b4de]"} />
          )}
        </button>
      ))}
      <div className="ml-auto flex shrink-0 items-center">
        <Btn label="Hidden icons" className="w-9">
          <Svg w={18} h={10} stroke="#fff" sw={1.5}><path d="M1 9 L9 1 L17 9" /></Svg>
        </Btn>
        <Btn label="Volume muted" className="w-9">
          <Svg w={22} h={20} stroke="#fff" sw={1.3}><path d="M1 7 H4.500 L10 1.500 V18.500 L4.500 13 H1Z M13.500 7 L20.500 14 M20.500 7 L13.500 14" /></Svg>
        </Btn>
        <Btn label="Meet now" className="w-9">
          <Svg w={18} h={22} stroke="#fff" sw={1.3}>
            <path d="M1.500 6 H11 V16.500 H1.500Z M11 9.500 L16.500 6.500 V16 L11 13 M3 3 Q8.500 -1 14 3 M3 19.500 Q8.500 23 14 19.500" />
          </Svg>
        </Btn>
        <Btn label="Update" className="w-9">
          <Svg w={25} h={24} stroke="#fff" sw={1.4}>
            <path d="M1 4 L24 1 V20 L1 21Z M7.500 11 Q11 6 15.500 9.500 V6.500 M15.500 9.500 H12.500 M17 12.500 Q14 18 9 15 V18 M9 14.500 H12" />
            <circle cx="18.500" cy="18.500" r="5.500" fill="#f5101c" stroke="none" />
          </Svg>
        </Btn>
        <Btn label="Battery" className="w-9">
          <Svg w={24} h={20} stroke="#fff" sw={1.4}>
            <path d="M2 1 V4 M6 1 V4 M.7 4 H7.300 V7 Q7 9.500 4 9.500 Q1 9.500 .7 7Z M4 9.500 V16 H7 M8 4.500 H22 V17 H7" />
            <path d="M9 6.500 H20.500 V15.500 H6.500 V11 Q9 10 9 6.500Z" fill="#fff" stroke="none" />
            <path d="M23.500 8 V13" />
          </Svg>
        </Btn>
        <Btn label="Network" className="w-9">
          <Svg w={24} h={20} stroke="#fff" sw={1.3}>
            <path d="M7 2 H23 V14 H3.500 V8 M1 1 H6.500 V7.500 H1Z M13 14 V18 M8.500 18.500 H17.500 M1.500 4.500 H6" />
          </Svg>
        </Btn>
        <div className="ml-[6px] w-[90px] text-center text-[17px] leading-[28px]">
          <div>4:08 PM</div>
          <div>7/18/2025</div>
        </div>
        <Btn label="Notifications" className="relative ml-[19px] h-[60px] w-[50px]">
          <Svg w={24} h={24} stroke="none" className="mr-[10px]">
            <path d="M0 0 H24 V18 H10 L4 23 V18 H0Z" fill="#fff" />
            <path d="M4 5 H20 M4 9 H20 M4 13 H12" stroke="#1c1c1c" strokeWidth="1.400" />
          </Svg>
          <span className="absolute top-[29px] right-[4px] flex h-6 w-[30px] items-center justify-center rounded-full border border-[#8a8a8a] bg-[#2b2b2b] text-[16px] font-bold">24</span>
        </Btn>
        <div className="ml-[12px] h-[60px] w-[7px] border-l border-[#777]" />
      </div>
    </div>
  );
}

function TimeTracker() {
  const bars = [
    ["Working Status: Active", "bg-[#7cc6cd]"],
    ["Active: 06:13:20", "bg-[#5fd992]"],
    ["In Active: 00:58:49", "bg-[#ef7468]"],
  ];
  return (
    <aside className="absolute right-0 bottom-[163px] w-[183px] overflow-hidden bg-[#555] py-[6px] pl-[6px] text-white">
      <div className="mb-3 flex justify-end">
        <button type="button" className="h-7 w-[52px] overflow-hidden bg-[#626262] pl-[3px] text-left text-[17px] leading-[28px] whitespace-nowrap">Open App</button>
      </div>
      <div className="flex flex-col gap-[2px]">
        {bars.map(([text, bg]) => (
          <div key={text} className={`${bg} h-[41px] overflow-hidden pl-[15px] text-[17px] leading-[43px] font-bold whitespace-nowrap`}>{text}</div>
        ))}
      </div>
    </aside>
  );
}

export default function App() {
  return (
    <div className={`${UI} relative flex h-screen w-full flex-col overflow-hidden bg-[#f0f0f0]`}>
      <TitleBar />
      <RibbonTabs />
      <Ribbon />
      <FormulaBar />
      <Worksheet />
      <SheetTabs />
      <StatusBar />
      <Taskbar />
      <TimeTracker />
    </div>
  );
}
